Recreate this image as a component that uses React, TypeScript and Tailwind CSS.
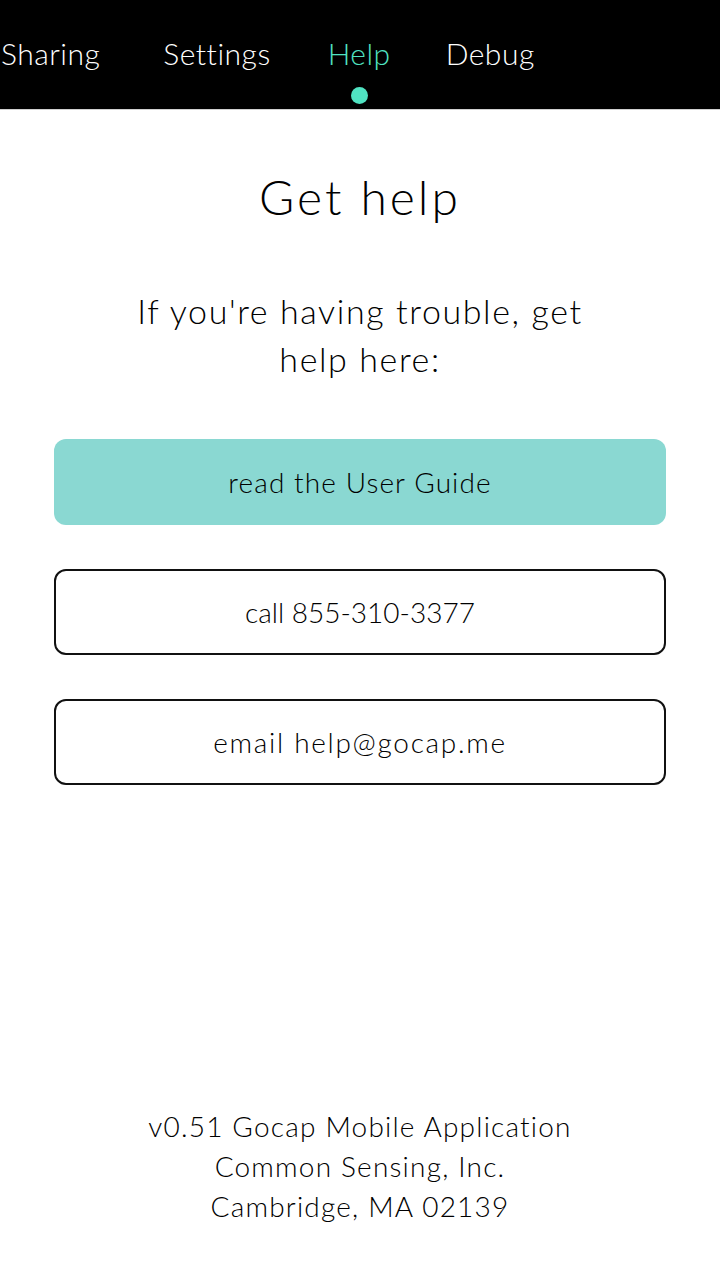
import React from "react";

// spacing before each tab, tuned to the screenshot's scroll position
const TABS = [
  { label: "Sharing", space: "ml-[1px]" },
  { label: "Settings", space: "ml-[63px]" },
  { label: "Help", space: "ml-[57px]" },
  { label: "Debug", space: "ml-[55px]" },
];
const ACTIVE = "Help";

function TabBar() {
  return (
    <div className="h-[110px] bg-black border-b border-[#d0d0d0] overflow-hidden">
      <div className="flex pt-[34px]">
        {TABS.map((tab) => (
          <div key={tab.label} className={"flex flex-col items-center " + tab.space}>
            <span
              className={
                tab.label === ACTIVE
                  ? "text-[30px] leading-[38px] tracking-[0.5px] text-[#50e3c2]"
                  : "text-[30px] leading-[38px] tracking-[0.5px] text-white"
              }
            >
              {tab.label}
            </span>
            {tab.label === ACTIVE && <div className="mt-[15px] w-[17px] h-[17px] rounded-full bg-[#50e3c2]" />}
          </div>
        ))}
      </div>
    </div>
  );
}

function HelpButton({ label, filled, tracking }: { label: string; filled?: boolean; tracking: string }) {
  return (
    <button
      className={
        (filled
          ? "w-full h-[86px] rounded-[12px] bg-[#8ad8d2] text-[28px] text-black "
          : "w-full h-[86px] rounded-[12px] border-2 border-[#111] bg-white text-[28px] text-black ") + tracking
      }
    >
      {label}
    </button>
  );
}

export default function App() {
  return (
    <div className="min-h-screen flex flex-col bg-white font-['Lato',sans-serif] font-light">
      <TabBar />

      <div className="flex flex-col items-center px-[54px]">
        <h1 className="mt-[57px] text-[48px] leading-[60px] tracking-[3px] font-light text-black">Get help</h1>
        <p className="mt-[60px] w-[500px] text-center text-[34px] leading-[48px] tracking-[1.6px] text-black">
          If you're having trouble, get help here:
        </p>

        <div className="mt-[56px] w-full flex flex-col gap-[44px]">
          <HelpButton label="read the User Guide" filled tracking="tracking-[1.1px]" />
          <HelpButton label="call 855-310-3377" tracking="tracking-[0px]" />
          <HelpButton label="email help@gocap.me" tracking="tracking-[1.7px]" />
        </div>
      </div>

      <div className="mt-auto pb-[54px] flex flex-col items-center text-[28px] leading-[40px] tracking-[1.2px] text-black">
        <span>v0.51 Gocap Mobile Application</span>
        <span>Common Sensing, Inc.</span>
        <span>Cambridge, MA 02139</span>
      </div>
    </div>
  );
}
